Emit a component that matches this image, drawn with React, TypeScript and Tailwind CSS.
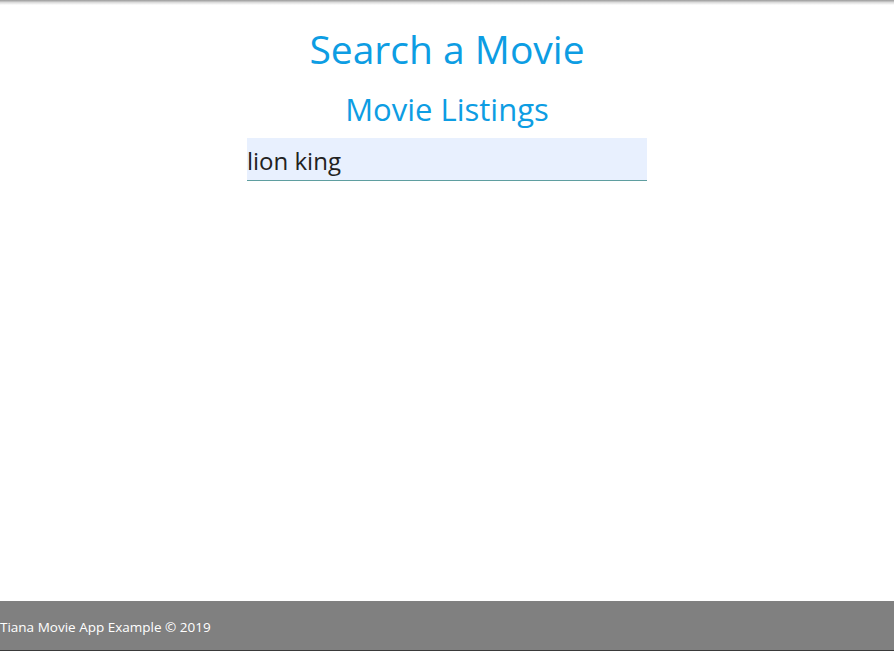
import React, { useState } from 'react';

const App = () => {
  const [query, setQuery] = useState('lion king');

  return (
    <div className="min-h-screen flex flex-col bg-white" style={{ fontFamily: '"Open Sans", sans-serif' }}>
      <div className="h-[5px] bg-gradient-to-b from-[#9a9a9a] via-[#dcdcdc] to-white" />
      <main className="flex-1 flex flex-col items-center">
        <h1 className="mt-[19px] text-[39px] leading-[50px] text-[#0d9de3]">Search a Movie</h1>
        <h2 className="mt-[15px] text-[31px] leading-[40px] text-[#0d9de3]">Movie Listings</h2>
        <input
          type="text"
          value={query}
          onChange={(e) => setQuery(e.target.value)}
          className="mt-[9px] w-[400px] h-[43px] bg-[#e8f0fe] border-b border-[#5f9ea0] text-[24px] text-[#222] outline-none px-0 pt-[2px]"
        />
      </main>
      <footer className="h-[50px] bg-[#808080] border-b border-[#3a3a3a] flex items-center pt-[3px]">
        <p className="text-[13.5px] text-white">Tiana Movie App Example © 2019</p>
      </footer>
    </div>
  );
};

export default App;
